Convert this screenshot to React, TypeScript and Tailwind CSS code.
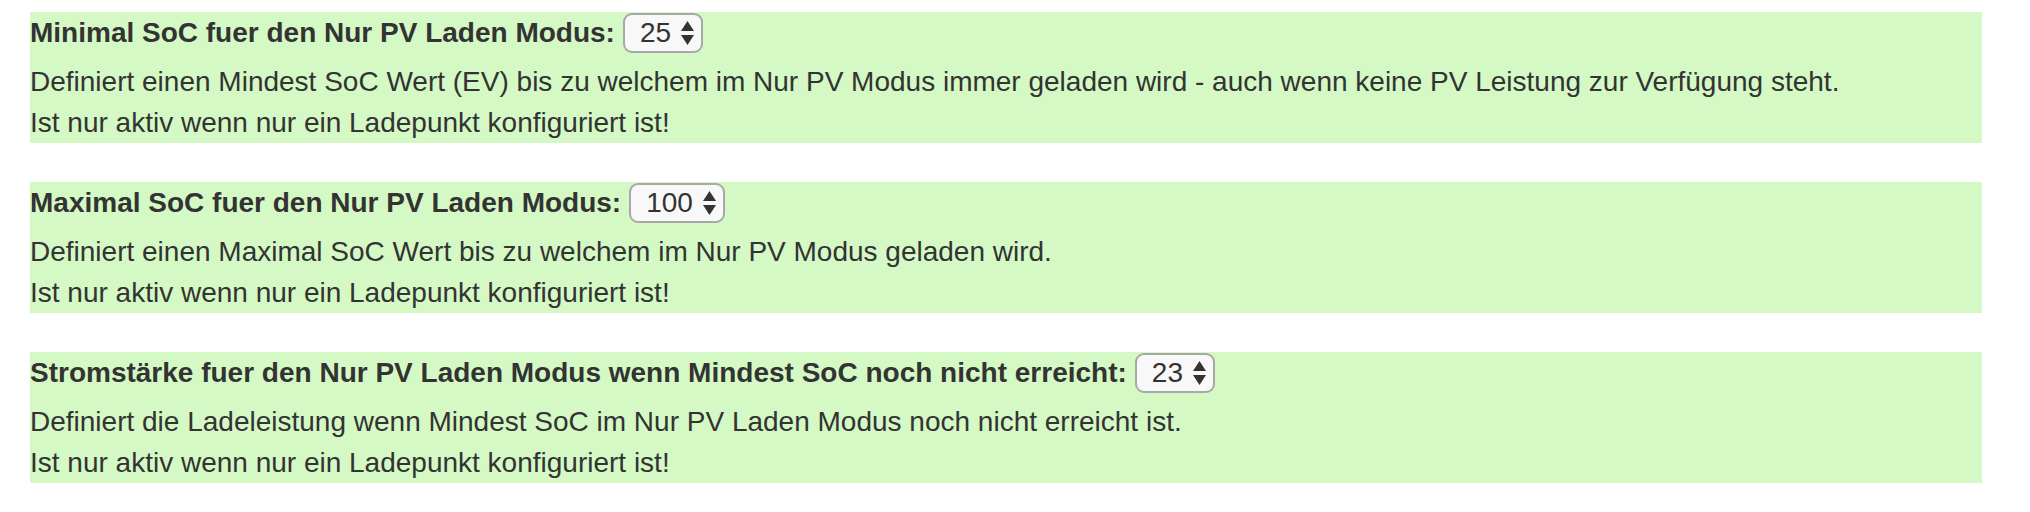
const settings = [
  {
    label: 'Minimal SoC fuer den Nur PV Laden Modus:',
    value: '25',
    text: 'Definiert einen Mindest SoC Wert (EV) bis zu welchem im Nur PV Modus immer geladen wird - auch wenn keine PV Leistung zur Verfügung steht.',
  },
  {
    label: 'Maximal SoC fuer den Nur PV Laden Modus:',
    value: '100',
    text: 'Definiert einen Maximal SoC Wert bis zu welchem im Nur PV Modus geladen wird.',
  },
  {
    label: 'Stromstärke fuer den Nur PV Laden Modus wenn Mindest SoC noch nicht erreicht:',
    value: '23',
    text: 'Definiert die Ladeleistung wenn Mindest SoC im Nur PV Laden Modus noch nicht erreicht ist.',
  },
]

function SelectArrows() {
  return (
    <svg width="13" height="24" viewBox="0 0 13 24" className="shrink-0">
      <polygon points="6.5,0 13,10 0,10" fill="#333" />
      <polygon points="0,14 13,14 6.5,24" fill="#333" />
    </svg>
  )
}

function FakeSelect({ value }: { value: string }) {
  return (
    <div className="flex items-center h-[40px] pl-[15px] pr-[7px] gap-[10px] border-2 border-[#a8a8a8] rounded-[9px] bg-[#f8f8f8] text-[28px] font-normal leading-none">
      <span>{value}</span>
      <SelectArrows />
    </div>
  )
}

export default function App() {
  return (
    <div className="pt-[12px] pl-[30px] pr-[48px] font-['Liberation_Sans',Arial,sans-serif] text-[#333]">
      {settings.map((s) => (
        <div key={s.label} className="bg-[#d4f9c4] mb-[39px]">
          <div className="flex items-center h-[42px] gap-[8px]">
            <span className="text-[28px] font-bold leading-[40px]">{s.label}</span>
            <FakeSelect value={s.value} />
          </div>
          <div className="mt-[7px] text-[28px] leading-[41px]">
            <div>{s.text}</div>
            <div>Ist nur aktiv wenn nur ein Ladepunkt konfiguriert ist!</div>
          </div>
        </div>
      ))}
    </div>
  )
}
